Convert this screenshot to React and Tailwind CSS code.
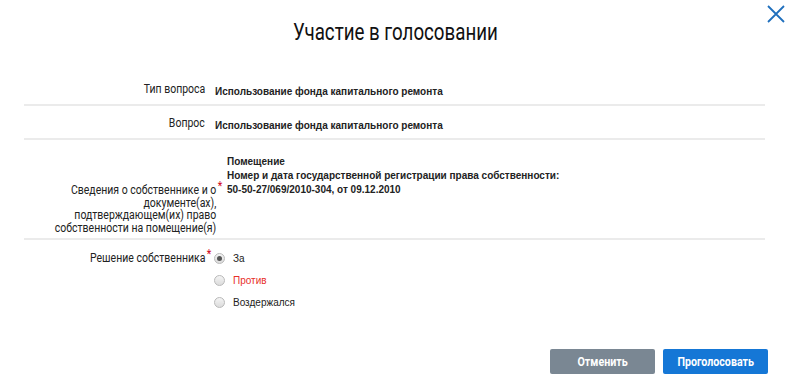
const roboto = "font-['Roboto',sans-serif]"

function Label({ children, className = '' }) {
  return (
    <div className={`w-[181px] shrink-0 text-right text-[12.5px] leading-[12.5px] text-[#222] font-normal ${roboto} ${className}`}>
      <span className="relative inline-block whitespace-nowrap scale-x-[0.84] origin-right">{children}</span>
    </div>
  )
}

const Star = () => <span className="absolute -right-[7px] -top-[4px] text-[#d0021b]">*</span>

function Radio({ checked, label, red }) {
  return (
    <div className="flex items-center gap-[8px] h-[22px]">
      <span className="w-[11px] h-[11px] rounded-full border border-[#b9b9b9] bg-gradient-to-b from-[#f4f4f4] to-[#dcdcdc] flex items-center justify-center">
        {checked && <span className="w-[5px] h-[5px] rounded-full bg-[#555]" />}
      </span>
      <span className={`text-[10px] font-['Liberation_Sans',Arial,sans-serif] ${red ? 'text-[#e8302a]' : 'text-[#222]'}`}>{label}</span>
    </div>
  )
}

export default function App() {
  return (
    <div className="w-[791px] h-[384px] bg-white relative overflow-hidden">
      <button className="absolute left-[767px] top-[5px] text-[#1f6fbd]">
        <svg width="18" height="18" viewBox="0 0 18 18" fill="none" stroke="currentColor" strokeWidth="1.8">
          <path d="M1 1L17 17M17 1L1 17" />
        </svg>
      </button>

      <div className="text-center pt-[18px]">
        <h1 className={`inline-block scale-x-[0.78] text-[24px] leading-[28px] text-[#111] whitespace-nowrap ${roboto}`}>
          Участие в голосовании
        </h1>
      </div>

      <div className="mx-[24px] mt-[36px] w-[741px] text-[10px] font-['Liberation_Sans',Arial,sans-serif] font-bold text-[#222]">
        <div className="flex border-b-2 border-[#ebebeb] h-[24px] pt-[1px]">
          <Label>Тип вопроса</Label>
          <div className="pl-[10px] pt-[1px]">Использование фонда капитального ремонта</div>
        </div>
        <div className="flex border-b-2 border-[#ebebeb] h-[34px] pt-[11px]">
          <Label>Вопрос</Label>
          <div className="pl-[10px] pt-[1px]">Использование фонда капитального ремонта</div>
        </div>
        <div className="flex border-b-2 border-[#ebebeb] h-[100px]">
          <Label className="pt-[44px]">
            Сведения о собственнике и о<Star />
            <br />документе(ах),
            <br />подтверждающем(их) право
            <br />собственности на помещение(я)
          </Label>
          <div className="pl-[22px] pt-[15px] leading-[14px]">
            <div>Помещение</div>
            <div>Номер и дата государственной регистрации права собственности:</div>
            <div>50-50-27/069/2010-304, от 09.12.2010</div>
          </div>
        </div>
        <div className="flex pt-[7px] font-normal">
          <Label className="pt-[5px]">Решение собственника<Star /></Label>
          <div className="pl-[9px]">
            <Radio checked label="За" />
            <Radio label="Против" red />
            <Radio label="Воздержался" />
          </div>
        </div>
      </div>

      <div className="absolute right-[23px] bottom-[10px] flex gap-[8px]">
        <button className={`w-[105px] h-[25px] rounded-[2px] bg-[#7a8793] text-white text-[13px] font-bold ${roboto}`}>
          <span className="inline-block scale-x-[0.82]">Отменить</span>
        </button>
        <button className={`w-[105px] h-[25px] rounded-[2px] bg-[#1577d6] text-white text-[13px] font-bold ${roboto}`}>
          <span className="inline-block scale-x-[0.82]">Проголосовать</span>
        </button>
      </div>
    </div>
  )
}
